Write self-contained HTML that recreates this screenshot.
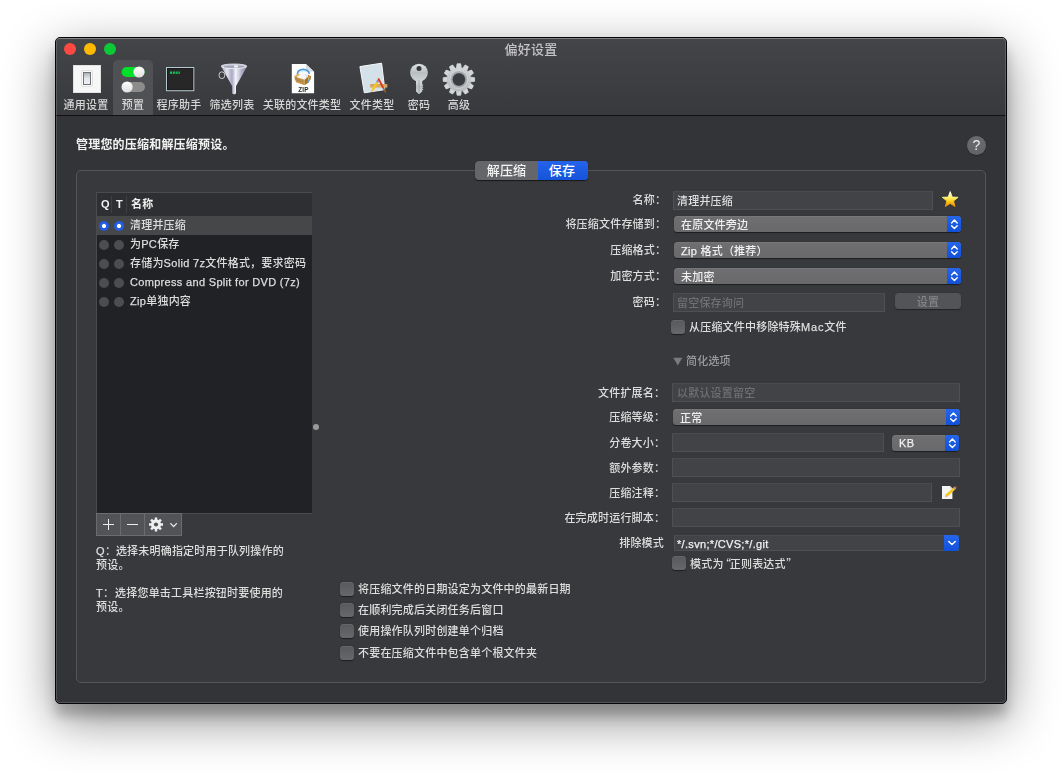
<!DOCTYPE html>
<html lang="zh-CN">
<head>
<meta charset="utf-8">
<title>偏好设置</title>
<style>
*{box-sizing:border-box;margin:0;padding:0}
html,body{width:1062px;height:777px;background:#fff;overflow:hidden}
body{position:relative;letter-spacing:.2px;font-weight:500;font-family:"Liberation Sans","Noto Sans CJK SC",sans-serif;font-size:11px;color:#dedede;-webkit-font-smoothing:antialiased}
.abs{position:absolute}
#win{position:absolute;left:55px;top:37px;width:952px;height:667px;background:#333437;border-radius:5px;border:1px solid #050506;
 box-shadow:0 16px 50px rgba(0,0,0,.46),0 12px 12px rgba(0,0,0,.20);overflow:hidden}
#win:after{content:"";position:absolute;left:0;top:0;right:0;bottom:0;border-radius:4px;box-shadow:inset 0 0 0 1px rgba(255,255,255,.16);pointer-events:none}
#tb{position:absolute;left:0;top:0;width:950px;height:78px;background:linear-gradient(#444548,#38393c);border-bottom:1px solid #111113;box-shadow:inset 0 1px 0 rgba(255,255,255,.22)}
.tl{position:absolute;top:43px;width:12px;height:12px;border-radius:50%}
#fg{position:absolute;left:0;top:0;width:1062px;height:777px;will-change:opacity}
.lbl{position:absolute;white-space:nowrap;line-height:14px;height:14px}
.r{text-align:right}
.c{display:inline-block;width:5px;white-space:nowrap;overflow:visible;letter-spacing:0}
.la{letter-spacing:.32px;-webkit-text-stroke:.25px currentColor}
.q{font-family:"Noto Sans CJK SC",sans-serif}
.tlab{position:absolute;top:98px;white-space:nowrap;line-height:14px;font-size:11px;color:#d6d6d6;text-align:center}
.field{position:absolute;background:linear-gradient(#424346,#424346);border:1px solid #4f5053;border-top-color:#4a4b4e;line-height:17px;padding-left:4px;padding-top:1px;white-space:nowrap}
.ph{color:#6f7073}
.t{display:block;will-change:opacity}
.pop{position:absolute;height:16px;border-radius:3.5px;background:linear-gradient(#6f6f72,#69696c);box-shadow:0 0.5px 1px rgba(0,0,0,.5),inset 0 .5px 0 rgba(255,255,255,.12);line-height:19px;padding-left:7px;white-space:nowrap;color:#f0f0f0;overflow:hidden}
.pop .cap svg{display:block}
.pop .cap{position:absolute;right:0;top:0;width:14px;height:16px;background:linear-gradient(#2566ec,#1150d8)}
.cb{position:absolute;width:14px;height:14px;border-radius:3.5px;background:linear-gradient(#58595c,#67686b);box-shadow:0 .5px 1px rgba(0,0,0,.5),inset 0 .5px 0 rgba(255,255,255,.15)}
.rad{position:absolute;width:10px;height:10px;border-radius:50%;background:#4c4d50}
.rad.on{background:radial-gradient(circle,#fff 0,#fff 1.6px,#2a64e6 2.4px,#1d57dc 5px)}
.row{position:absolute;left:97px;width:215px;height:19px}
</style>
</head>
<body>
<div id="win">
 <div id="tb"></div>
</div>

<div id="fg">
<!-- traffic lights -->
<div class="tl" style="left:64px;background:#fe4943"></div>
<div class="tl" style="left:84px;background:#feba00"></div>
<div class="tl" style="left:104px;background:#0bca35"></div>
<div class="lbl" style="left:431px;top:43px;width:200px;text-align:center;font-size:13px;color:#c4c4c6">偏好设置</div>

<!-- selected toolbar item bg -->
<div class="abs" style="left:113px;top:60px;width:40px;height:55px;background:#505154;border-radius:5px 5px 0 0"></div>

<!-- toolbar icons -->
<!--ICONS-->
<svg class="abs" style="left:0;top:0" width="1062" height="120" viewBox="0 0 1062 120">
 <defs>
  <linearGradient id="gsw" x1="0" y1="0" x2="0" y2="1"><stop offset="0" stop-color="#a9adb2"/><stop offset=".5" stop-color="#e4e7ea"/><stop offset="1" stop-color="#eef0f2"/></linearGradient>
  <linearGradient id="gknob" x1="0" y1="0" x2="0" y2="1"><stop offset="0" stop-color="#ffffff"/><stop offset="1" stop-color="#dedede"/></linearGradient>
  <linearGradient id="gfun" x1="0" y1="0" x2="1" y2="0"><stop offset="0" stop-color="#9c9cb4"/><stop offset=".22" stop-color="#e4e4f0"/><stop offset=".42" stop-color="#a8a8c0"/><stop offset=".56" stop-color="#f4f4fb"/><stop offset=".78" stop-color="#b2b2c8"/><stop offset="1" stop-color="#7e7e98"/></linearGradient>
  <linearGradient id="gkey" x1="0" y1="0" x2="0" y2="1"><stop offset="0" stop-color="#dfe3e4"/><stop offset=".5" stop-color="#b9bfc1"/><stop offset="1" stop-color="#cfd3d4"/></linearGradient>
  <linearGradient id="ggear" gradientUnits="userSpaceOnUse" x1="0" y1="-16" x2="0" y2="16"><stop offset="0" stop-color="#d6d9db"/><stop offset="1" stop-color="#b2b5b8"/></linearGradient>
  <linearGradient id="gbox" x1="0" y1="0" x2="1" y2="1"><stop offset="0" stop-color="#d9a04e"/><stop offset="1" stop-color="#a8712a"/></linearGradient>
 </defs>

 <!-- 1 general: light switch -->
 <rect x="73" y="65" width="28" height="28" fill="#f7f7f7"/>
 <rect x="73.5" y="65.5" width="27" height="27" fill="none" stroke="#e2e2e2"/>
 <rect x="81.5" y="70.5" width="11" height="16" rx="1.5" fill="#fbfbfb" stroke="#e0e0e2"/>
 <rect x="83.5" y="72.5" width="7" height="12" fill="url(#gsw)" stroke="#6f7378" stroke-width="1"/>

 <!-- 2 presets toggles -->
 <rect x="121.6" y="66.9" width="23" height="10.2" rx="5.1" fill="#04e02a"/>
 <circle cx="139" cy="72" r="5.6" fill="url(#gknob)"/>
 <rect x="122" y="82" width="23" height="10" rx="5" fill="#8c8c8a"/>
 <circle cx="127.1" cy="87" r="5.6" fill="url(#gknob)"/>

 <!-- 3 terminal -->
 <rect x="166" y="67" width="28.3" height="24.2" fill="#b2cacf"/>
 <rect x="167" y="68" width="26.3" height="22.2" fill="#19191a"/>
 <rect x="167.8" y="68.8" width="24.7" height="20.6" fill="#272728"/>
 <g fill="#17c257"><rect x="170" y="71.5" width="2" height="2.4"/><rect x="172.8" y="71.5" width="2" height="2.4"/><rect x="175.6" y="71.5" width="2" height="2.4"/><rect x="178.4" y="71.5" width="1.4" height="2.4"/></g>

 <!-- 4 funnel -->
 <ellipse cx="221.9" cy="75.2" rx="2.9" ry="3.4" fill="none" stroke="#d6d6e0" stroke-width=".9"/>
 <path d="M221.2 66.4 L247 66.4 L236 86.3 L236 93.6 Q234 95.2 232.2 93.6 L232.2 86.3 Z" fill="url(#gfun)"/>
 <ellipse cx="234" cy="66.3" rx="12.9" ry="2.3" fill="#c9c9da" stroke="#f0f0f8" stroke-width=".8"/>
 <ellipse cx="234" cy="66.7" rx="10.6" ry="1.3" fill="#a2a2b8"/>
 <ellipse cx="236" cy="66.4" rx="2.2" ry="1.2" fill="#f2f2fa"/>
 <!-- 5 zip document -->
 <path d="M291.8 63.9 H305.9 L314.1 71.8 V93.2 H291.8 Z" fill="#fefefe"/>
 <path d="M305.9 63.9 L314.1 71.8 H307.4 Q305.9 71.8 305.9 70.3 Z" fill="#d9dcde"/>
 <path d="M297.4 74.2 Q297.6 69.6 303.2 69.4 Q308.4 69.6 309.4 73.8" fill="none" stroke="#4a9de2" stroke-width="1.7"/>
 <path d="M298.6 73.6 Q299.4 71 303.2 70.9 Q307 71 308 73.4" fill="none" stroke="#bfe0f6" stroke-width=".7"/>
 <path d="M300.2 72.6 L307.6 72.2 L308.2 82 L301.2 82.4 Z" fill="#f4f6f8"/>
 <path d="M305.8 74.5 Q307.6 78 306.4 83.4" fill="none" stroke="#c9d3da" stroke-width=".8"/>
 <path d="M294.1 76.3 L297.8 73.4 L300.4 74.6 L296.6 77.3 Z" fill="#e3b364"/>
 <path d="M294.1 76.3 L304.6 79.8 L304.6 85.3 L296.1 82.2 Z" fill="#c9913f"/>
 <path d="M294.6 78 L303 80.9 L303 82.6 L295.2 79.9 Z" fill="#a98a52"/>
 <path d="M304.6 79.8 L308.4 76.6 L308.7 82.6 L304.6 85.3 Z" fill="#a9752a"/>
 <path d="M307.6 74.6 L311.2 76.2 L310.6 80.6 L309.6 77.6 L308.4 78.6 Z" fill="#bf8a38"/>
 <path d="M307.6 82.4 Q309.8 80.6 309.8 77.4" fill="none" stroke="#4a9de2" stroke-width="1.2"/>
 <text x="303.4" y="91.7" font-family="Liberation Sans, sans-serif" font-weight="bold" font-size="6.3" text-anchor="middle" fill="#262626" letter-spacing=".1">ZIP</text>

 <!-- 6 file types -->
 <path d="M359.9 66.6 L381.6 63.2 L384.8 89.6 L364.3 92.8 Z" fill="#d4e1e9" stroke="#f4f8fa" stroke-width="1" stroke-linejoin="round"/>
 <rect x="370.1" y="84" width="17.2" height="3.6" fill="#d9ab68"/>
 <path d="M372 84v1.6M374 84v1.2M376 84v1.6M380 84v1.2M382 84v1.6M384 84v1.2M386 84v1.6" stroke="#b58a4c" stroke-width=".6"/>
 <path d="M371.1 92 L371.6 89.8 L376 81.8 L378 82.9 L373.4 90.9 Z" fill="#f6c61a"/>
 <path d="M371.1 92 L371.6 89.8 L373.4 90.9 Z" fill="#e8c9a0"/>
 <path d="M376 81.8 L376.7 80.6 L378.7 81.7 L378 82.9 Z" fill="#6f9fd0"/>
 <path d="M376.7 80.6 L377.3 79.8 Q378.6 79.6 379.2 80.9 L378.7 81.7 Z" fill="#ea5fa6"/>
 <path d="M377.5 78.8 L379.1 78 L384.1 87.6 L382.5 88.5 Z" fill="#d83c14"/>
 <path d="M382.5 88.5 L384.1 87.6 L384.7 88.8 L383.1 89.7 Z" fill="#3f78c0"/>
 <path d="M383.1 89.7 L384.7 88.8 L386.3 92.6 L385.6 93 Z" fill="#9a6418"/>

 <!-- 7 key -->
 <path d="M416 79.5 V91.6 L419 94.2 L422.2 91.6 V90.2 L423.4 89.4 L422.2 88.4 L423.4 87.2 L422.2 86.2 L423.4 85 L422.2 84 V79.5 Z" fill="url(#gkey)"/>
 <circle cx="419" cy="72.6" r="8.9" fill="url(#gkey)"/>
 <circle cx="419" cy="68.6" r="2.5" fill="#38393c"/>
 <path d="M419 80 V93.6" stroke="#9aa0a3" stroke-width=".8"/>

 <!-- 8 gear -->
 <g transform="translate(458.9 79.5)">
  <g fill="url(#ggear)" stroke="url(#ggear)" stroke-width=".8" stroke-linejoin="round"><path d="M-2.5 -11 L-1.8 -15.7 H1.8 L2.5 -11 Z" transform="rotate(0)"/><path d="M-2.5 -11 L-1.8 -15.7 H1.8 L2.5 -11 Z" transform="rotate(30)"/><path d="M-2.5 -11 L-1.8 -15.7 H1.8 L2.5 -11 Z" transform="rotate(60)"/><path d="M-2.5 -11 L-1.8 -15.7 H1.8 L2.5 -11 Z" transform="rotate(90)"/><path d="M-2.5 -11 L-1.8 -15.7 H1.8 L2.5 -11 Z" transform="rotate(120)"/><path d="M-2.5 -11 L-1.8 -15.7 H1.8 L2.5 -11 Z" transform="rotate(150)"/><path d="M-2.5 -11 L-1.8 -15.7 H1.8 L2.5 -11 Z" transform="rotate(180)"/><path d="M-2.5 -11 L-1.8 -15.7 H1.8 L2.5 -11 Z" transform="rotate(210)"/><path d="M-2.5 -11 L-1.8 -15.7 H1.8 L2.5 -11 Z" transform="rotate(240)"/><path d="M-2.5 -11 L-1.8 -15.7 H1.8 L2.5 -11 Z" transform="rotate(270)"/><path d="M-2.5 -11 L-1.8 -15.7 H1.8 L2.5 -11 Z" transform="rotate(300)"/><path d="M-2.5 -11 L-1.8 -15.7 H1.8 L2.5 -11 Z" transform="rotate(330)"/></g>
  <circle r="12" fill="url(#ggear)"/>
  <circle r="8.9" fill="#aaadb1" stroke="#d8dbdd" stroke-width=".8"/>
  <circle r="6.8" fill="#8b8e92"/>
  <circle r="6.2" fill="#3b3c3f"/>
 </g>
</svg>
<!--/ICONS-->

<div class="tlab" style="left:56px;width:60px">通用设置</div>
<div class="tlab" style="left:103px;width:60px">预置</div>
<div class="tlab" style="left:149px;width:60px">程序助手</div>
<div class="tlab" style="left:202px;width:60px">筛选列表</div>
<div class="tlab" style="left:252px;width:100px">关联的文件类型</div>
<div class="tlab" style="left:342px;width:60px">文件类型</div>
<div class="tlab" style="left:389px;width:60px">密码</div>
<div class="tlab" style="left:429px;width:60px">高级</div>

<!-- heading -->
<div class="lbl" style="left:76px;top:138px;font-size:12px;font-weight:bold;color:#f2f2f2">管理您的压缩和解压缩预设。</div>
<!-- help -->
<div class="abs" style="left:967px;top:136px;width:19px;height:19px;border-radius:50%;background:linear-gradient(#6a6b6e,#626366);box-shadow:0 .5px 1px rgba(0,0,0,.5);text-align:center;line-height:19px;font-size:14px;font-weight:normal;color:#ededed;letter-spacing:0">?</div>

<!-- group box -->
<div class="abs" style="left:76px;top:170px;width:910px;height:513px;background:#38393c;border:1px solid #545558;border-radius:5px"></div>

<!-- tabs -->
<div class="abs" style="left:475px;top:161px;width:113px;height:19px;border-radius:4px;background:#656669;box-shadow:0 .5px 1px rgba(0,0,0,.6);overflow:hidden;font-size:13px;line-height:19px;color:#f4f4f4">
 <div class="abs" style="left:0;top:0;width:63px;height:19px;text-align:center">解压缩</div>
 <div class="abs" style="left:63px;top:0;width:50px;height:19px;padding-right:2px;text-align:center;background:linear-gradient(#2563ea,#1554da);color:#fff">保存</div>
</div>

<!-- list -->
<div class="abs" style="left:96px;top:192px;width:216px;height:322px;background:#212225;border:1px solid #4a4b4e;border-right:none"></div>
<div class="abs" style="left:97px;top:193px;width:215px;height:23px;background:#2e2f32"></div>
<div class="abs" style="left:111px;top:196px;width:1px;height:17px;background:#3f4043"></div>
<div class="abs" style="left:126px;top:196px;width:1px;height:17px;background:#3f4043"></div>
<div class="lbl" style="left:101px;top:197px;font-weight:bold;color:#f0f0f0">Q</div>
<div class="lbl" style="left:116px;top:197px;font-weight:bold;color:#f0f0f0">T</div>
<div class="lbl" style="left:131px;top:197px;font-weight:bold;color:#f0f0f0">名称</div>
<div class="abs" style="left:97px;top:216px;width:215px;height:19px;background:#464749"></div>

<div class="rad on" style="left:99px;top:221px"></div><div class="rad on" style="left:114px;top:221px"></div>
<div class="lbl" style="left:130px;top:218px">清理并压缩</div>
<div class="rad" style="left:99px;top:240px"></div><div class="rad" style="left:114px;top:240px"></div>
<div class="lbl" style="left:130px;top:237px">为<span class="la">PC</span>保存</div>
<div class="rad" style="left:99px;top:259px"></div><div class="rad" style="left:114px;top:259px"></div>
<div class="lbl" style="left:130px;top:256px">存储为<span class="la">Solid 7z</span>文件格式，要求密码</div>
<div class="rad" style="left:99px;top:278px"></div><div class="rad" style="left:114px;top:278px"></div>
<div class="lbl" style="left:130px;top:275px"><span class="la">Compress and Split for DVD (7z)</span></div>
<div class="rad" style="left:99px;top:297px"></div><div class="rad" style="left:114px;top:297px"></div>
<div class="lbl" style="left:130px;top:294px"><span class="la">Zip</span>单独内容</div>

<!-- list buttons -->
<div class="abs" style="left:96px;top:513px;width:86px;height:23px;background:#525356;border:1px solid #6b6c6f"></div>
<div class="abs" style="left:120px;top:514px;width:1px;height:21px;background:#6b6c6f"></div>
<div class="abs" style="left:144px;top:514px;width:1px;height:21px;background:#6b6c6f"></div>
<svg class="abs" style="left:96px;top:513px" width="86" height="23" viewBox="96 513 86 23">
 <path d="M103 524.5h11M108.5 519v11" stroke="#ececec" stroke-width="1" fill="none"/>
 <path d="M127 524.5h11" stroke="#ececec" stroke-width="1" fill="none"/>
 <g transform="translate(156,524.5)" fill="#f0f0f0">
  <rect x="-1.25" y="-7" width="2.5" height="14"/><rect x="-1.25" y="-7" width="2.5" height="14" transform="rotate(45)"/><rect x="-1.25" y="-7" width="2.5" height="14" transform="rotate(90)"/><rect x="-1.25" y="-7" width="2.5" height="14" transform="rotate(135)"/>
  <circle r="5"/><circle r="2.1" fill="#525356"/>
 </g>
 <path d="M170.8 523.6l2.8 3 2.8-3" stroke="#ececec" stroke-width="1.3" fill="none" stroke-linecap="round" stroke-linejoin="round"/>
</svg>

<!-- hints -->
<div class="lbl" style="left:96px;top:544px;height:auto;white-space:normal;width:200px"><span class="la">Q</span><span class="c">：</span><span style="margin-left:6px">选择未明确指定时用于队列操作的</span><br>预设。</div>
<div class="lbl" style="left:96px;top:586px;height:auto;white-space:normal;width:200px"><span class="la">T</span><span class="c">：</span><span style="margin-left:7px">选择您单击工具栏按钮时要使用的</span><br>预设。</div>

<!-- splitter dot -->
<div class="abs" style="left:313px;top:424px;width:6px;height:6px;border-radius:50%;background:#9a9a9b"></div>

<!-- right form labels -->
<div class="lbl r" style="left:460px;width:200px;top:193px">名称<span class="c">：</span></div>
<div class="lbl r" style="left:460px;width:200px;top:217px">将压缩文件存储到<span class="c">：</span></div>
<div class="lbl r" style="left:460px;width:200px;top:243px">压缩格式<span class="c">：</span></div>
<div class="lbl r" style="left:460px;width:200px;top:269px">加密方式<span class="c">：</span></div>
<div class="lbl r" style="left:460px;width:200px;top:295px">密码<span class="c">：</span></div>

<div class="field" style="left:673px;top:191px;width:260px;height:19px;padding-left:3px"><span class="t">清理并压缩</span></div>
<svg class="abs" style="left:942px;top:191px" width="17" height="18" viewBox="0 0 17 18">
 <defs><linearGradient id="sg" x1="0" y1="0" x2="0" y2="1"><stop offset="0" stop-color="#fffef0"/><stop offset=".38" stop-color="#fff27a"/><stop offset=".62" stop-color="#ffd21e"/><stop offset="1" stop-color="#ec8400"/></linearGradient></defs>
 <path d="M8.20 0.60 L10.26 6.07 L16.09 6.34 L11.53 9.98 L13.08 15.61 L8.20 12.40 L3.32 15.61 L4.87 9.98 L0.31 6.34 L6.14 6.07Z" fill="url(#sg)" stroke="url(#sg)" stroke-width=".9" stroke-linejoin="round"/>
</svg>

<div class="pop" style="left:674px;top:216px;width:287px">在原文件旁边<div class="cap"><svg width="14" height="16" viewBox="0 0 14 16"><path d="M4.6 6.9L7.4 4L10.2 6.9M4.6 9.7L7.4 12.6L10.2 9.7" fill="none" stroke="#fff" stroke-width="1.4" stroke-linecap="round" stroke-linejoin="round"/></svg></div></div>
<div class="pop" style="left:674px;top:242px;width:287px"><span class="la">Zip</span> 格式（推荐）<div class="cap"><svg width="14" height="16" viewBox="0 0 14 16"><path d="M4.6 6.9L7.4 4L10.2 6.9M4.6 9.7L7.4 12.6L10.2 9.7" fill="none" stroke="#fff" stroke-width="1.4" stroke-linecap="round" stroke-linejoin="round"/></svg></div></div>
<div class="pop" style="left:674px;top:268px;width:287px">未加密<div class="cap"><svg width="14" height="16" viewBox="0 0 14 16"><path d="M4.6 6.9L7.4 4L10.2 6.9M4.6 9.7L7.4 12.6L10.2 9.7" fill="none" stroke="#fff" stroke-width="1.4" stroke-linecap="round" stroke-linejoin="round"/></svg></div></div>

<div class="field ph" style="left:673px;top:293px;width:212px;height:19px;padding-left:3px"><span class="t">留空保存询问</span></div>
<div class="abs" style="left:895px;top:293px;width:66px;height:16px;border-radius:3.5px;background:#535457;box-shadow:0 .5px 1px rgba(0,0,0,.4);text-align:center;line-height:18px;color:#858689">设置</div>

<div class="cb" style="left:671px;top:320px"></div>
<div class="lbl" style="left:689px;top:320px">从压缩文件中移除特殊<span class="la" style="letter-spacing:.8px">Mac</span>文件</div>

<svg class="abs" style="left:673px;top:357px" width="10" height="9" viewBox="0 0 10 9"><path d="M0.3 0.8H9.3L4.8 8.6Z" fill="#7a7b7e"/></svg>
<div class="lbl" style="left:686px;top:354px;color:#9a9b9e">简化选项</div>

<div class="lbl r" style="left:459px;width:200px;top:386px">文件扩展名<span class="c">：</span></div>
<div class="lbl r" style="left:459px;width:200px;top:410px">压缩等级<span class="c">：</span></div>
<div class="lbl r" style="left:459px;width:200px;top:436px">分卷大小<span class="c">：</span></div>
<div class="lbl r" style="left:459px;width:200px;top:461px">额外参数<span class="c">：</span></div>
<div class="lbl r" style="left:459px;width:200px;top:486px">压缩注释<span class="c">：</span></div>
<div class="lbl r" style="left:459px;width:200px;top:511px">在完成时运行脚本<span class="c">：</span></div>
<div class="lbl r" style="left:464px;width:200px;top:536px">排除模式</div>

<div class="field ph" style="left:672px;top:383px;width:288px;height:19px"><span class="t">以默认设置留空</span></div>
<div class="pop" style="left:673px;top:409px;width:287px">正常<div class="cap"><svg width="14" height="16" viewBox="0 0 14 16"><path d="M4.6 6.9L7.4 4L10.2 6.9M4.6 9.7L7.4 12.6L10.2 9.7" fill="none" stroke="#fff" stroke-width="1.4" stroke-linecap="round" stroke-linejoin="round"/></svg></div></div>
<div class="field" style="left:672px;top:433px;width:212px;height:19px"></div>
<div class="pop" style="left:892px;top:435px;width:67px;line-height:17px"><span class="la">KB</span><div class="cap"><svg width="14" height="16" viewBox="0 0 14 16"><path d="M4.6 6.9L7.4 4L10.2 6.9M4.6 9.7L7.4 12.6L10.2 9.7" fill="none" stroke="#fff" stroke-width="1.4" stroke-linecap="round" stroke-linejoin="round"/></svg></div></div>
<div class="field" style="left:672px;top:458px;width:288px;height:19px"></div>
<div class="field" style="left:672px;top:483px;width:260px;height:19px"></div>
<div class="field" style="left:672px;top:508px;width:288px;height:19px"></div>
<div class="field" style="left:674px;top:535px;width:285px;height:16px;line-height:15px;padding-left:2px;padding-top:1px;color:#f0f0f0"><span class="t la">*/.svn;*/CVS;*/.git</span></div>
<div class="abs" style="left:944px;top:535px;width:15px;height:16px;border-radius:0 3.5px 3.5px 0;background:linear-gradient(#2566ec,#1150d8)"><svg style="display:block" width="15" height="16" viewBox="0 0 15 16"><path d="M4.8 6.5L8 9.5L11.2 6.5" fill="none" stroke="#fff" stroke-width="1.5" stroke-linecap="round" stroke-linejoin="round"/></svg></div>

<svg class="abs" style="left:940px;top:484px" width="18" height="17" viewBox="940 484 18 17">
 <path d="M942 486H950L952.4 488.4V499H942Z" fill="#f3f3f3"/>
 <path d="M950 486L952.4 488.4H950Z" fill="#c9c9c9"/>
 <path d="M945 497.2L945.6 494.6L953.4 487.6L955.2 489.4L947.6 496.6Z" fill="#f5c71c"/>
 <path d="M945 497.2L945.6 494.6L947.6 496.6Z" fill="#e9b98a"/>
 <path d="M953.4 487.6L954.4 486.7L956.2 488.5L955.2 489.4Z" fill="#a9abae"/>
 <path d="M954.4 486.7L955.2 486L956.9 487.7L956.2 488.5Z" fill="#e8502a"/>
</svg>
<div class="cb" style="left:672px;top:556px"></div>
<div class="lbl" style="left:690px;top:556px">模式为<span class="q" style="margin:0 -1.4px 0 -3.7px">“</span>正则表达式<span class="q" style="margin-left:.5px">”</span></div>

<div class="cb" style="left:340px;top:582px"></div>
<div class="lbl" style="left:358px;top:582px">将压缩文件的日期设定为文件中的最新日期</div>
<div class="cb" style="left:340px;top:603px"></div>
<div class="lbl" style="left:358px;top:603px">在顺利完成后关闭任务后窗口</div>
<div class="cb" style="left:340px;top:624px"></div>
<div class="lbl" style="left:358px;top:624px">使用操作队列时创建单个归档</div>
<div class="cb" style="left:340px;top:646px"></div>
<div class="lbl" style="left:358px;top:646px">不要在压缩文件中包含单个根文件夹</div>

</div>
</body>
</html>
